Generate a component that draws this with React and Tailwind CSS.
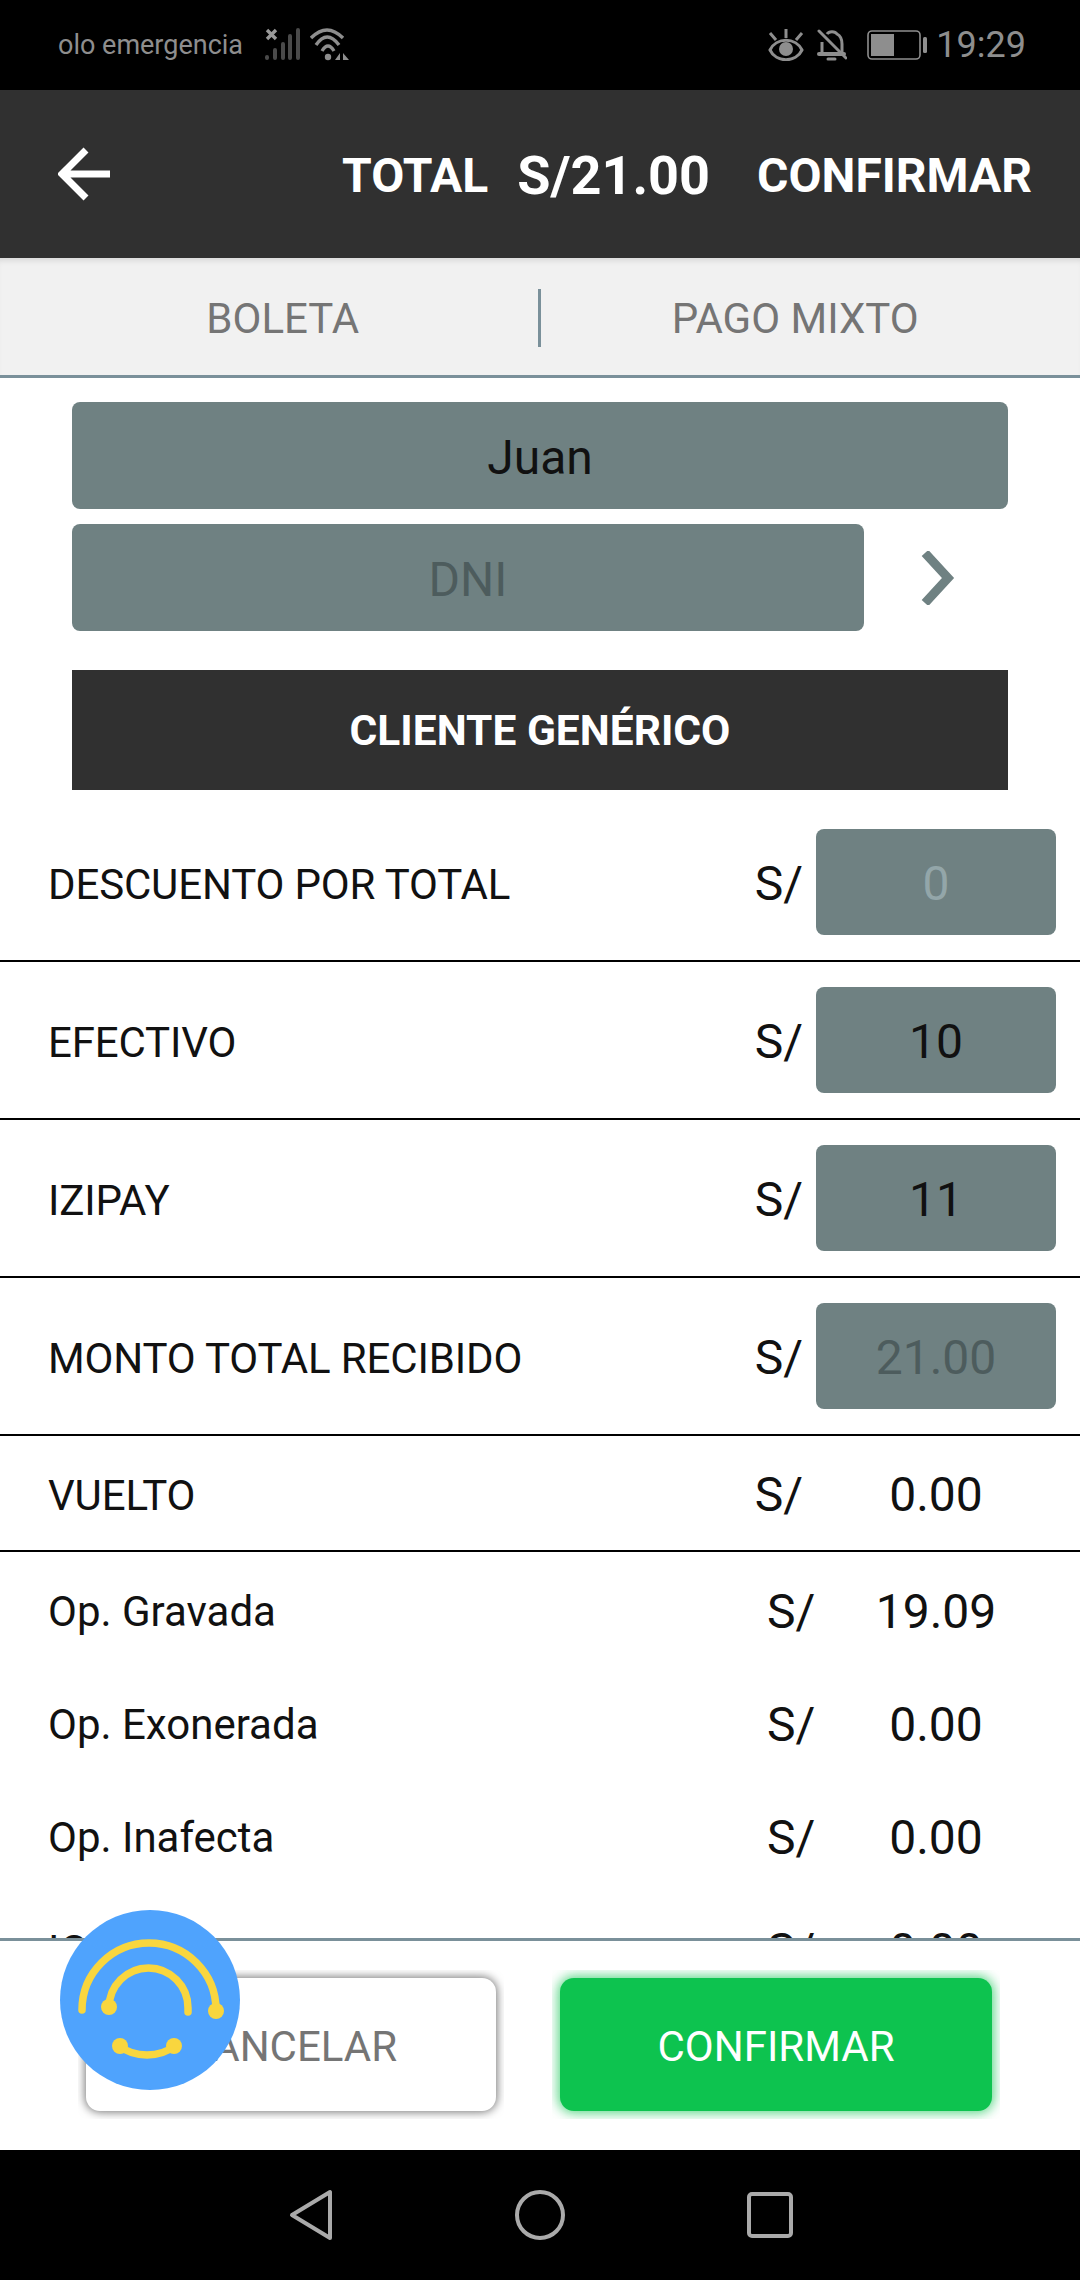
const Row = ({ label, value, valueColor = "text-[#111]" }) => (
  <div className="flex h-[158px] shrink-0 items-center border-b-2 border-black pl-[48px] pr-6">
    <span className="flex-1 pt-1 text-[42px] tracking-[-0.15px] text-[#111]">{label}</span>
    <span className="mr-[13px] pt-1 text-[48px] text-[#111]">S/</span>
    <div className={`flex h-[106px] w-[240px] items-center justify-center rounded-[8px] bg-[#6f8182] pt-1 text-[48px] ${valueColor}`}>
      {value}
    </div>
  </div>
)

const OpRow = ({ label, value }) => (
  <div className="flex h-[113px] shrink-0 items-center pl-[48px] pr-6">
    <span className="flex-1 text-[42px] text-[#111]">{label}</span>
    <span className="w-[49px] text-[48px] text-[#111]">S/</span>
    <span className="w-[240px] text-center text-[48px] text-[#111]">{value}</span>
  </div>
)

const StatusBar = () => (
  <div className="flex h-[90px] shrink-0 items-center bg-black pl-[58px] pr-[54px] text-[#8e8e8e]">
    <span className="text-[27px]">olo emergencia</span>
    <svg className="ml-[22px]" width="36" height="34" viewBox="0 0 36 34">
      <path d="M2 2l9 9M11 2l-9 9" stroke="#999" strokeWidth="3.4" />
      <path d="M2 30v-1M10 30v-8M18 30v-14M25 30v-22M33 30v-28" stroke="#4a4a4a" strokeWidth="4" strokeLinecap="round" />
    </svg>
    <svg className="ml-[9px]" width="40" height="34" viewBox="0 0 40 34">
      <path d="M1 10Q17 -6 33 10M6 17Q17 1 29 17M12 23Q18 13 24 23" fill="none" stroke="#8e8e8e" strokeWidth="3.4" />
      <circle cx="18" cy="29" r="3.2" fill="#8e8e8e" />
      <path d="M30 25v7h-5zM33 25v7h6z" fill="#8e8e8e" />
    </svg>
    <div className="flex-1" />
    <svg width="36" height="32" viewBox="0 0 36 32">
      <path d="M2 21C8 8 28 8 34 21C28 34 8 34 2 21z" fill="none" stroke="#8e8e8e" strokeWidth="3" />
      <circle cx="18" cy="20" r="7" fill="#8e8e8e" />
      <path d="M18 0v9M2 4l6 7M34 4l-6 7" stroke="#8e8e8e" strokeWidth="3" />
    </svg>
    <svg className="ml-[13px]" width="30" height="34" viewBox="0 0 30 34">
      <path d="M5 26V14M10 6C12 3 18 3 20 6C24 8 25 12 25 16V26" fill="none" stroke="#8e8e8e" strokeWidth="3" />
      <path d="M2 26H27" stroke="#8e8e8e" strokeWidth="4" strokeLinecap="round" />
      <path d="M11 31h7M2 3L29 30" stroke="#8e8e8e" strokeWidth="3" strokeLinecap="round" />
    </svg>
    <svg className="ml-[20px]" width="61" height="30" viewBox="0 0 61 30">
      <rect x="1" y="1" width="52" height="28" rx="4" fill="none" stroke="#8e8e8e" strokeWidth="1.6" />
      <rect x="4" y="4" width="23" height="22" fill="#8e8e8e" />
      <rect x="56" y="7" width="4" height="16" rx="1.5" fill="#8e8e8e" />
    </svg>
    <span className="ml-[8px] text-[36px]">19:29</span>
  </div>
)

const Logo = () => (
  <div className="absolute left-[60px] top-[1910px] flex h-[180px] w-[180px] items-center justify-center rounded-full bg-[#4fa3fd]">
    <svg width="180" height="180" viewBox="0 0 180 180">
      <g fill="none" stroke="#f9d63e" strokeWidth="7.5" strokeLinecap="round">
        <path d="M22 100A67 67 0 0 1 156 100" />
        <path d="M49 98A39.5 40 0 0 1 128 98V102" />
        <path d="M60 136C74 148 100 148 114 136" />
      </g>
      <g fill="#f9d63e">
        <circle cx="49" cy="97" r="8" />
        <circle cx="156" cy="101" r="8" />
        <circle cx="60" cy="136" r="8" />
        <circle cx="114" cy="136" r="8" />
      </g>
    </svg>
  </div>
)

export default function App() {
  return (
    <div className="relative flex h-[2280px] w-[1080px] flex-col overflow-hidden bg-white font-['Roboto',sans-serif]">
      <StatusBar />

      <div className="flex h-[168px] shrink-0 items-center bg-[#303030] pl-[58px] pr-[48px] text-white">
        <svg width="54" height="54" viewBox="0 0 54 54">
          <path d="M52 27H5M28 3L4 27l24 24" fill="none" stroke="#fff" strokeWidth="7" />
        </svg>
        <div className="flex-1" />
        <span className="pt-[3px] text-[48px] font-bold">TOTAL</span>
        <span className="ml-[29px] pt-[3px] text-[54px] font-bold">S/21.00</span>
        <span className="ml-[47px] pt-[3px] text-[48px] font-bold">CONFIRMAR</span>
      </div>

      <div className="flex h-[120px] shrink-0 items-center border-b-[3px] border-[#7a909a] bg-[#f1f1f1] pt-[3px] text-[42px] text-[#757575] shadow-[inset_0_6px_6px_-4px_rgba(0,0,0,0.12)]">
        <div className="flex flex-1 justify-center pl-[28px]">BOLETA</div>
        <div className="h-[58px] w-[3px] bg-[#7a909a]" />
        <div className="flex flex-1 justify-center pr-[30px]">PAGO MIXTO</div>
      </div>

      <div className="shrink-0 px-[72px] pt-6">
        <div className="flex h-[107px] items-center justify-center rounded-[8px] bg-[#6f8182] pt-1 text-[48px] text-[#111]">Juan</div>
        <div className="mt-[15px] flex items-center">
          <div className="flex h-[107px] w-[792px] items-center justify-center rounded-[8px] bg-[#6f8182] pt-1 text-[48px] text-[#4d5c5d]">DNI</div>
          <svg className="ml-[57px]" width="34" height="54" viewBox="0 0 34 54">
            <path d="M4 2L27 27L4 52" fill="none" stroke="#6f8182" strokeWidth="9" />
          </svg>
        </div>
        <div className="mt-[39px] flex h-[120px] items-center justify-center bg-[#303030] pt-[2px] text-[42.5px] font-bold text-white">CLIENTE GENÉRICO</div>
      </div>

      <div className="mt-[14px] flex min-h-0 flex-1 flex-col overflow-hidden">
        <Row label="DESCUENTO POR TOTAL" value="0" valueColor="text-[#93a6a9]" />
        <Row label="EFECTIVO" value="10" />
        <Row label="IZIPAY" value="11" />
        <Row label="MONTO TOTAL RECIBIDO" value="21.00" valueColor="text-[#4d5c5d]" />
        <div className="mb-[3px] flex h-[116px] shrink-0 items-center border-b-2 border-black pl-[48px] pr-6">
          <span className="flex-1 pt-1 text-[42px] tracking-[-0.15px] text-[#111]">VUELTO</span>
          <span className="mr-[13px] pt-1 text-[48px] text-[#111]">S/</span>
          <span className="w-[240px] pt-1 text-center text-[48px] text-[#111]">0.00</span>
        </div>
        <OpRow label="Op. Gravada" value="19.09" />
        <OpRow label="Op. Exonerada" value="0.00" />
        <OpRow label="Op. Inafecta" value="0.00" />
        <OpRow label="IGV" value="0.00" />
      </div>

      <div className="flex h-[212px] shrink-0 items-start border-t-[3px] border-[#7a909a] bg-white pl-[78px] pt-[29px]">
        <div className="overflow-hidden p-2">
          <button className="flex h-[133px] w-[410px] items-center justify-center rounded-[14px] bg-white pt-[3px] text-[42px] text-[#757575] shadow-[0_0_10px_1px_rgba(0,0,0,0.55)]">CANCELAR</button>
        </div>
        <div className="ml-[48px] overflow-hidden p-2">
          <button className="flex h-[133px] w-[432px] items-center justify-center rounded-[14px] bg-[#0dc34f] pt-[3px] text-[42px] text-white shadow-[0_0_12px_2px_rgba(13,195,79,0.7)]">CONFIRMAR</button>
        </div>
      </div>

      <div className="flex h-[130px] shrink-0 items-center justify-center gap-[182px] bg-black pl-[2px]">
        <svg width="44" height="52" viewBox="0 0 44 52">
          <path d="M41 3v46L3 26z" fill="none" stroke="#aaa" strokeWidth="4" strokeLinejoin="round" />
        </svg>
        <svg width="50" height="50" viewBox="0 0 50 50">
          <circle cx="25" cy="25" r="23" fill="none" stroke="#aaa" strokeWidth="4" />
        </svg>
        <svg width="46" height="46" viewBox="0 0 46 46">
          <rect x="2" y="2" width="42" height="42" rx="3" fill="none" stroke="#aaa" strokeWidth="4" />
        </svg>
      </div>

      <Logo />
    </div>
  )
}
